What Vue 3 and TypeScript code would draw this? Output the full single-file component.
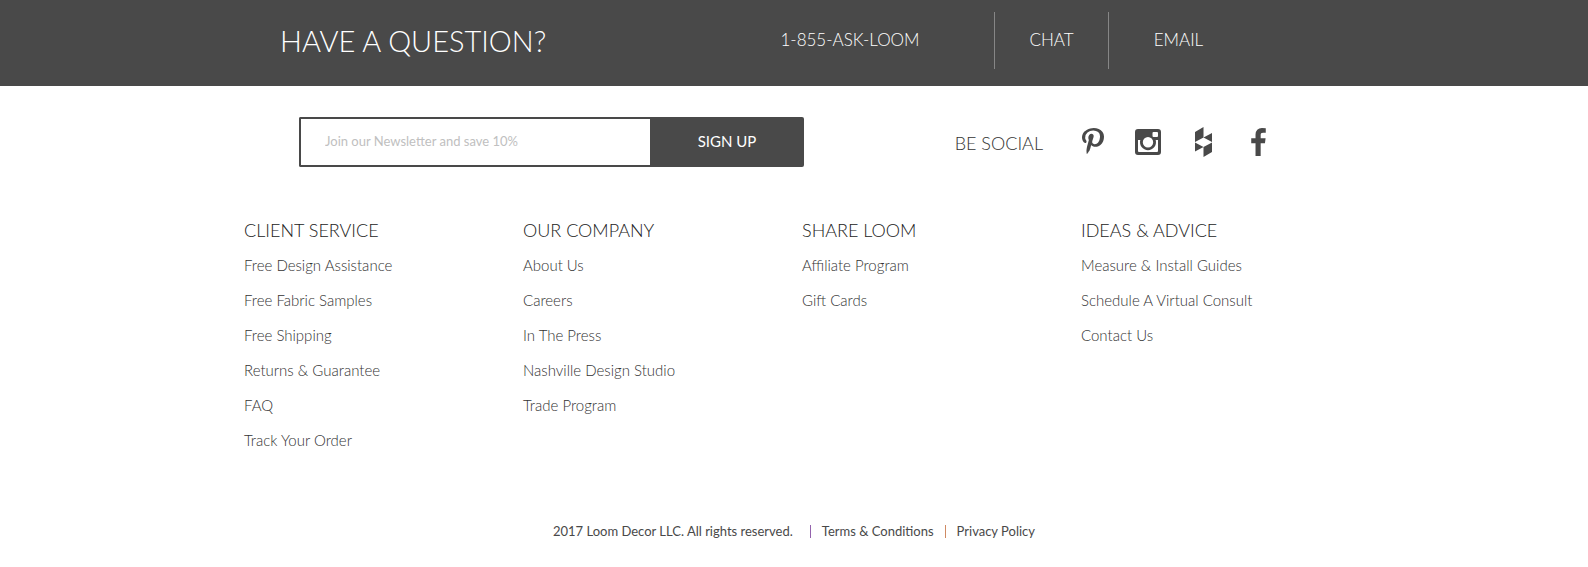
<script setup lang="ts">
interface LinkGroup {
  title: string
  links: string[]
}

const groups: LinkGroup[] = [
  {
    title: 'CLIENT SERVICE',
    links: [
      'Free Design Assistance',
      'Free Fabric Samples',
      'Free Shipping',
      'Returns & Guarantee',
      'FAQ',
      'Track Your Order',
    ],
  },
  {
    title: 'OUR COMPANY',
    links: ['About Us', 'Careers', 'In The Press', 'Nashville Design Studio', 'Trade Program'],
  },
  { title: 'SHARE LOOM', links: ['Affiliate Program', 'Gift Cards'] },
  {
    title: 'IDEAS & ADVICE',
    links: ['Measure & Install Guides', 'Schedule A Virtual Consult', 'Contact Us'],
  },
]
</script>

<template>
  <footer class="footer">
    <section class="question">
      <div class="question-inner">
        <h2 class="question-title">HAVE A QUESTION?</h2>
        <nav class="contacts" aria-label="Contact">
          <a class="phone" href="#">1-855-ASK-LOOM</a>
          <a class="chat" href="#">CHAT</a>
          <a class="email" href="#">EMAIL</a>
        </nav>
      </div>
    </section>

    <section class="engage">
      <form class="newsletter" @submit.prevent>
        <input type="email" aria-label="Newsletter email" placeholder="Join our Newsletter and save 10%" />
        <button type="submit">SIGN UP</button>
      </form>
      <div class="social">
        <span class="social-title">BE SOCIAL</span>
        <a href="#" aria-label="Pinterest">
          <svg width="22" height="28" viewBox="256 0 1280 1792" preserveAspectRatio="none">
            <path d="M256 597q0-108 37.5-203.5t103.5-166.5 152-123 185-78 202-26q158 0 294 66.5t221 193.5 85 287q0 96-19 188t-60 177-100 149.5-145 103-189 38.5q-68 0-135-32t-96-88q-10 39-28 112.5t-23.5 95-20.5 71-26 71-32 62.5-46 77.5-62 86.5l-14 5-9-10q-15-157-15-188 0-92 21.5-206.5t66.5-287.5 52-203q-32-65-32-169 0-83 52-156t132-73q61 0 95 40.5t34 102.5q0 66-44 191t-44 187q0 63 45 104.5t109 41.5q55 0 102-25t78.5-68 56-95 38-110.5 20-111 6.5-99.5q0-173-109.5-269.5t-285.5-96.5q-200 0-334 129.5t-134 328.5q0 44 12.5 85t27 65 27 45.5 12.5 30.5q0 28-15 73t-37 45q-2 0-17-3-51-15-90.5-56t-61-94.5-32.5-108-11-106.5z" />
          </svg>
        </a>
        <a href="#" aria-label="Instagram">
          <svg width="26" height="26" viewBox="0 0 26 26">
            <path fill-rule="evenodd" d="M3 0h20a3 3 0 0 1 3 3v20a3 3 0 0 1-3 3H3a3 3 0 0 1-3-3V3a3 3 0 0 1 3-3zM18.500 3a1 1 0 0 0-1 1v3a1 1 0 0 0 1 1h3.500a1 1 0 0 0 1-1V4a1 1 0 0 0-1-1zM3 11v11a1 1 0 0 0 1 1h18a1 1 0 0 0 1-1V11h-2.300a8 8 0 1 1-15.400 0zM13 8a5.200 5.200 0 1 0 0 10.400A5.200 5.200 0 0 0 13 8z" />
          </svg>
        </a>
        <a href="#" aria-label="Houzz">
          <svg width="17" height="30" viewBox="0 0 17 30">
            <path d="M0 5L8.500 0v10.500L0 15zM8.500 10.500L17 6v9zM0 15.500l8.500 4.500L0 24.500zM8.500 20l8.500-4.500V25l-8.500 5z" />
          </svg>
        </a>
        <a href="#" aria-label="Facebook">
          <svg width="15" height="28" viewBox="479 0 864 1664">
            <path d="M1343 12v264h-157q-86 0-116 36t-30 108v189h293l-39 296h-254v759h-306v-759h-255v-296h255v-218q0-186 104-288.500t277-102.500q147 0 228 12z" />
          </svg>
        </a>
      </div>
    </section>

    <nav class="groups" aria-label="Footer">
      <section v-for="group in groups" :key="group.title">
        <h3>{{ group.title }}</h3>
        <ul>
          <li v-for="link in group.links" :key="link">
            <a href="#">{{ link }}</a>
          </li>
        </ul>
      </section>
    </nav>

    <div class="legal">
      <span>2017 Loom Decor LLC. All rights reserved.</span>
      <i class="divider violet"></i>
      <a href="#">Terms &amp; Conditions</a>
      <i class="divider copper"></i>
      <a href="#">Privacy Policy</a>
    </div>
  </footer>
</template>

<style>
body {
  margin: 0;
  background: #fff;
}
</style>

<style scoped>
.footer {
  color: #494949;
  font-family: Lato, "Liberation Sans", sans-serif;
  font-weight: 300;
}

.footer * {
  box-sizing: border-box;
}

a {
  color: inherit;
  text-decoration: none;
}

h2,
h3,
ul {
  margin: 0;
  padding: 0;
  font-weight: 300;
  list-style: none;
}

.question {
  background: #494949;
  color: #fff;
}

.question-inner {
  display: flex;
  justify-content: space-between;
  max-width: 1140px;
  margin: 0 auto;
  padding: 12px 116px 17px 56px;
}

.question-title {
  font-size: 29px;
  line-height: 57px;
}

.contacts {
  display: flex;
  font-size: 17px;
  line-height: 56px;
  text-align: center;
}

.phone {
  width: 288px;
}

.chat {
  width: 115px;
  border: solid #868686;
  border-width: 0 1px;
}

.email {
  width: 139px;
}

.engage {
  display: flex;
  justify-content: space-between;
  max-width: 1140px;
  margin: 0 auto;
  padding: 31px 88px 0 75px;
}

.newsletter {
  display: flex;
  width: 505px;
  height: 50px;
}

.newsletter input {
  flex: 1;
  min-width: 0;
  padding: 0 24px 2px;
  border: 2px solid #494949;
  border-right: 0;
  border-radius: 2px 0 0 2px;
  background: #fff;
  font: 400 13px Lato, sans-serif;
}

.newsletter input::placeholder {
  color: #c0c0c0;
}

.newsletter button {
  width: 154px;
  padding: 0 0 2px;
  border: 0;
  border-radius: 0 2px 2px 0;
  background: #494949;
  color: #fff;
  font: 400 15px Lato, sans-serif;
}

.social {
  display: flex;
  align-items: center;
}

.social a {
  display: flex;
  justify-content: center;
  width: 36px;
  margin-left: 19px;
}

.social svg {
  fill: #494949;
}

.social-title {
  margin-right: 13px;
  padding-top: 2px;
  color: #333;
  font-size: 18px;
}

.groups {
  display: grid;
  grid-template-columns: repeat(4, 1fr);
  max-width: 1140px;
  margin: 0 auto;
  padding: 46px 4px 0 20px;
}

.groups h3 {
  color: #222;
  font-size: 18px;
  line-height: 35px;
}

.groups li {
  color: #333;
  font-size: 15px;
  line-height: 35px;
}

.legal {
  display: flex;
  align-items: center;
  justify-content: center;
  padding: 62px 0 26px;
  font-size: 13px;
  font-weight: 400;
  line-height: 22px;
}

.divider {
  width: 1px;
  height: 13px;
  margin: 0 11px;
}

.violet {
  margin-left: 17px;
  background: #9463ad;
}

.copper {
  background: #cf8a63;
}
</style>
